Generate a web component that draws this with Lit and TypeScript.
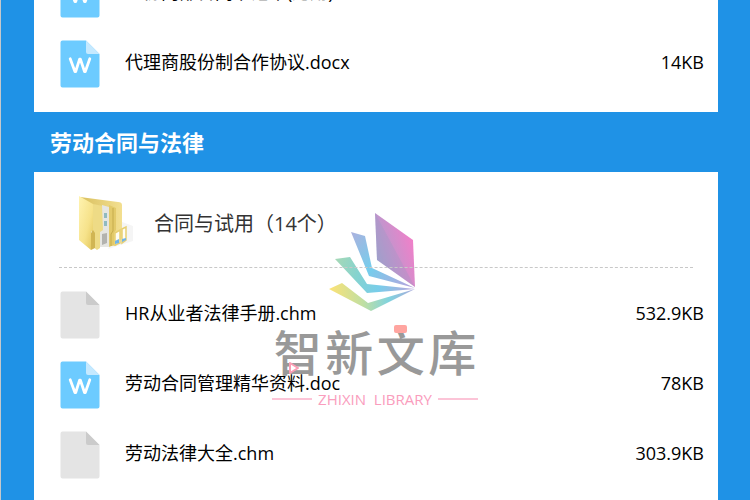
import { LitElement, html, css, svg, nothing } from "lit";
import { customElement, property } from "lit/decorators.js";

interface FileItem {
  name: string;
  size: string;
  kind: "word" | "blank";
}

const contracts: FileItem[] = [
  { name: "一份内部合同书范本(适用)", size: "", kind: "word" },
  { name: "代理商股份制合作协议.docx", size: "14KB", kind: "word" },
];

const labour: FileItem[] = [
  { name: "HR从业者法律手册.chm", size: "532.9KB", kind: "blank" },
  { name: "劳动合同管理精华资料.doc", size: "78KB", kind: "word" },
  { name: "劳动法律大全.chm", size: "303.9KB", kind: "blank" },
];

@customElement("file-icon")
class FileIcon extends LitElement {
  @property() kind: "word" | "blank" = "blank";

  static styles = css`
    :host { display: block; flex: none; }
    svg { display: block; }
  `;

  render() {
    const word = this.kind === "word";
    return html`<svg width="40" height="48" viewBox="0 0 40 48" aria-hidden="true">
      <path d="M2 .5H26L39.5 14V45.5a2 2 0 0 1-2 2H2.5a2 2 0 0 1-2-2V2.5a2 2 0 0 1 2-2z" fill=${word ? "#6dcbff" : "#e4e4e4"} />
      <path d="M26 .5L39.5 14H28a2 2 0 0 1-2-2z" fill=${word ? "#c5e9ff" : "#cbcbcb"} />
      ${word
        ? svg`<path d="M10.2 18.800L14.900 31.500H15.700L19.600 19.200H20.400L24.500 31.500H25.300L29.800 18.800" fill="none" stroke="#fff" stroke-width="2.800" stroke-linejoin="round" stroke-linecap="round" />`
        : nothing}
    </svg>`;
  }
}

@customElement("folder-icon")
class FolderIcon extends LitElement {
  static styles = css`
    :host { display: block; flex: none; }
    svg { display: block; }
  `;

  render() {
    return html`<svg width="56" height="56" viewBox="0 0 56 56" aria-hidden="true">
      <defs>
        <linearGradient id="front" x1="0" y1="0" x2="1" y2="1">
          <stop offset="0" stop-color="#fff3b0" /><stop offset=".6" stop-color="#f6e28a" /><stop offset="1" stop-color="#e2c65c" />
        </linearGradient>
        <linearGradient id="back" x1="0" y1="0" x2="1" y2="0">
          <stop offset="0" stop-color="#d9c05f" /><stop offset="1" stop-color="#f3df90" />
        </linearGradient>
      </defs>
      <path d="M30 53L55 45L55 30L44 26z" fill="#f5f5f5" />
      <path d="M2 1L40 6Q44 6 44 9V42L38 50L18 48z" fill="url(#back)" />
      <path d="M15 8L25 10V34L22 36V52L19 54L14 50z" fill="#eedb86" />
      <path d="M24 9L31 11V51L22 51V36L25 34z" fill="#e6e6e2" />
      <path d="M26 17h3v5h-3zM26 25h3v5h-3z" fill="#91bac0" />
      <path d="M24 38l5-1v10l-5 2z" fill="#b3b3af" />
      <path d="M31 9L38 12V34L36 37V49L31 51z" fill="#e3ca6a" />
      <path d="M35 12V35L33 38V50" fill="none" stroke="#c6ac4d" />
      <path d="M37 37L42 34V47L37 49zM44 33L48 31V44L44 47V37z" fill="#fffdf4" stroke="#e7cf73" stroke-width="1.5" />
      <path d="M37 45l4-2v4l-4 1zM44 43l4-1v2l-4 2z" fill="#72b5e7" />
      <path d="M1 0L15 8V34L13 36V54L1 44z" fill="url(#front)" />
      <path d="M15 34L17 37V52L13 54V37z" fill="#d1b553" />
    </svg>`;
  }
}

@customElement("file-row")
class FileRow extends LitElement {
  @property({ attribute: false }) file!: FileItem;

  static styles = css`
    :host { display: block; }
    .row {
      display: flex;
      align-items: center;
      height: 70px;
      padding: 0 14px 0 26px;
      font-size: 18px;
      line-height: 24px;
      color: #000;
    }
    .name, .size { padding-bottom: 4px; }
    .name {
      flex: 1;
      margin-left: 25px;
      color: inherit;
      text-decoration: none;
      white-space: nowrap;
    }
  `;

  render() {
    return html`<div class="row">
      <file-icon .kind=${this.file.kind}></file-icon>
      <a class="name" href="#">${this.file.name}</a>
      <span class="size">${this.file.size}</span>
    </div>`;
  }
}

@customElement("library-mark")
class LibraryMark extends LitElement {
  static styles = css`
    :host { display: block; }
    .book { display: block; margin: 0 0 9px 56px; }
    .title {
      position: relative;
      display: grid;
      grid-template-columns: repeat(4, 1fr);
      justify-items: center;
      height: 68px;
      font-size: 48px;
      line-height: 64px;
      font-weight: 500;
      color: #999;
    }
    .dot {
      position: absolute;
      left: 122px;
      top: 4px;
      width: 13px;
      height: 8px;
      border-radius: 2px;
      background: #ffa5a0;
    }
    .play { position: absolute; left: 16px; top: 40px; }
    .sub {
      display: flex;
      align-items: center;
      gap: 6px;
      font-size: 15px;
      line-height: 20px;
      color: #fa9dbd;
      white-space: pre;
    }
    .rule { flex: 1; height: 2px; background: #fcc4d7; }
  `;

  render() {
    return html`
      <svg class="book" width="88" height="100" viewBox="0 0 88 100" aria-hidden="true">
        <defs>
          <linearGradient id="a" x1="1" y1=".2" x2="0" y2=".8"><stop stop-color="#fb7bc8" /><stop offset="1" stop-color="#9da6d0" /></linearGradient>
          <linearGradient id="b" gradientUnits="userSpaceOnUse" x1="24" y1="22" x2="86" y2="75"><stop stop-color="#a9b3df" /><stop offset=".45" stop-color="#75cdec" /><stop offset="1" stop-color="#b9a2dc" /></linearGradient>
          <linearGradient id="c" gradientUnits="userSpaceOnUse" x1="8" y1="48" x2="86" y2="76"><stop stop-color="#a5d8b7" /><stop offset=".3" stop-color="#85d3cf" /><stop offset=".6" stop-color="#78cdea" /><stop offset="1" stop-color="#b9a5db" /></linearGradient>
          <linearGradient id="d" gradientUnits="userSpaceOnUse" x1="2" y1="78" x2="86" y2="78"><stop stop-color="#fbe276" /><stop offset=".4" stop-color="#bfdfa3" /><stop offset=".7" stop-color="#80d3df" /><stop offset="1" stop-color="#aaaadc" /></linearGradient>
        </defs>
        <path d="M47 1L85 28L87 75L49 48z" fill="url(#a)" />
        <path d="M47 1L87 75L49 48z" fill="#849bbd" opacity=".2" />
        <path d="M23 20L37 24L44 56L87 76L41 64z" fill="url(#b)" />
        <path d="M7 47L22 45L39 72L87 77L39 81z" fill="url(#c)" />
        <path d="M1 77L14 71L40 91L87 77L43 99z" fill="url(#d)" />
      </svg>
      <div class="title">
        <span>智</span><span>新</span><span>文</span><span>库</span>
        <i class="dot"></i>
        <svg class="play" width="12" height="14" viewBox="0 0 12 14" aria-hidden="true">
          <path d="M2 2L10 7L2 12z" fill="#fff" stroke="#fa9db4" stroke-width="2" stroke-linejoin="round" />
        </svg>
      </div>
      <div class="sub"><i class="rule"></i><span>ZHIXIN  LIBRARY</span><i class="rule"></i></div>
    `;
  }
}

@customElement("app-root")
class AppRoot extends LitElement {
  static styles = css`
    :host {
      display: block;
      height: 100vh;
      overflow: hidden;
      box-sizing: border-box;
      border-left: 1px solid #c4c8cc;
      background: #1f92e6;
      font-family: "Open Sans", "Noto Sans CJK SC", sans-serif;
    }
    .page {
      display: flex;
      flex-direction: column;
      min-height: 100%;
      padding: 0 32px 0 33px;
    }
    .panel { background: #fff; }
    .first {
      display: flex;
      flex-direction: column;
      justify-content: flex-end;
      height: 112px;
      box-sizing: border-box;
      padding-bottom: 13px;
    }
    h2 {
      margin: 0;
      padding: 0 16px;
      font-size: 22px;
      line-height: 60px;
      font-weight: 700;
      color: #fff;
    }
    .second { position: relative; flex: 1; padding-bottom: 12px; }
    .folder {
      display: flex;
      align-items: center;
      gap: 20px;
      height: 86px;
      margin: 0 25px 12px;
      padding: 9px 19px 0;
      border-bottom: 1px dashed #c8c8c8;
      font-size: 20px;
      line-height: 28px;
      color: #333;
    }
    .folder a { color: inherit; text-decoration: none; }
    .list, .folder { position: relative; z-index: 1; }
    .mark {
      position: absolute;
      left: 238px;
      top: 40px;
      width: 206px;
    }
  `;

  render() {
    return html`<main class="page">
      <section class="panel first">
        ${contracts.map((f) => html`<file-row .file=${f}></file-row>`)}
      </section>
      <h2>劳动合同与法律</h2>
      <section class="panel second">
        <library-mark class="mark"></library-mark>
        <div class="folder">
          <folder-icon></folder-icon>
          <a href="#">合同与试用（14个）</a>
        </div>
        <div class="list">
          ${labour.map((f) => html`<file-row .file=${f}></file-row>`)}
        </div>
      </section>
    </main>`;
  }
}
